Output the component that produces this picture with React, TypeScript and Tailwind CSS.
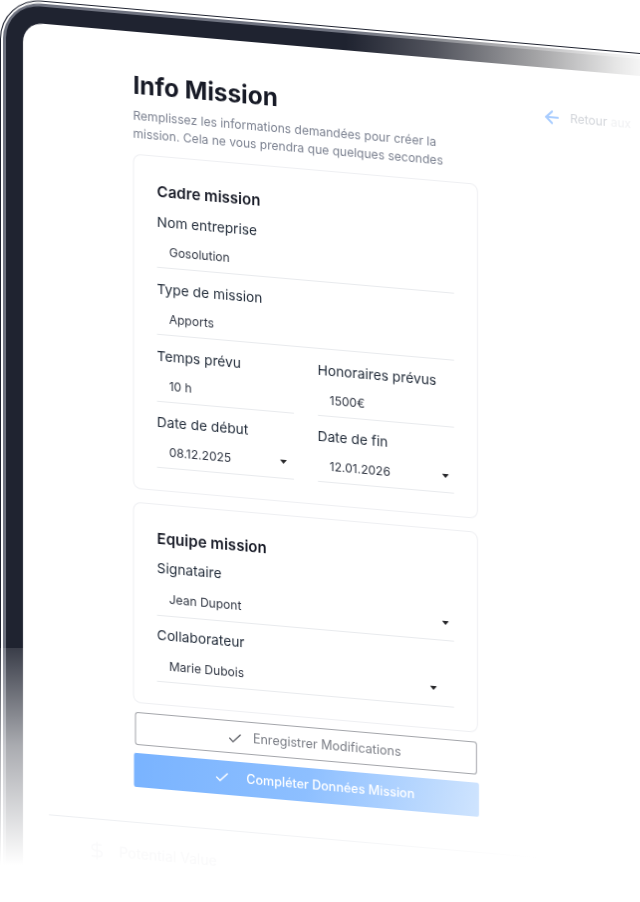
import { ArrowLeft, Check, DollarSign } from 'lucide-react';

const bandFade =
  'bg-[linear-gradient(90deg,#1f2330_0,#1f2330_340px,#53555e_430px,#a3a3a5_530px,#e6e6e6_610px,#ffffff_650px)]';
const lineFade =
  'bg-[linear-gradient(90deg,#6f7380_0,#6f7380_340px,#8a8c92_430px,#bcbcbe_530px,#ececec_610px,#ffffff_650px)]';

const Caret = () => (
  <svg width="7" height="4" viewBox="0 0 7 4" className="shrink-0 -mt-[3px]">
    <path d="M0 0h7L3.5 4z" fill="#27272a" />
  </svg>
);

function Field({
  label,
  value,
  select,
  caretPad = 'pr-[5px]',
  inputH = 'h-[31px]',
}: {
  label: string;
  value: string;
  select?: boolean;
  caretPad?: string;
  inputH?: string;
}) {
  return (
    <div>
      <div className="h-6 text-[13.7px] leading-[18px] text-[#1f2937]">{label}</div>
      <div className={`flex items-center justify-between border-b border-[#e8eaed] pl-3 ${inputH} ${caretPad}`}>
        <span className="text-[12px] text-[#2f3542]">{value}</span>
        {select && <Caret />}
      </div>
    </div>
  );
}

export default function App() {
  return (
    <div className="relative h-[902px] w-[640px] overflow-hidden bg-white font-['Inter',sans-serif]">
      <div className="-mt-[3px] w-[800px] origin-top-left [transform:skewY(5deg)] blur-[0.3px]">
        {/* device frame */}
        <div className="rounded-[42px] border border-[#1f2330] bg-white pl-[2px] pt-[2px]">
          <div className={`rounded-[38px] pl-[3px] pt-[3px] ${lineFade}`}>
            <div className={`rounded-[34px] pl-[17px] pt-[17px] ${bandFade}`}>
              <div className="h-[1100px] rounded-[20px] bg-white pl-[26px] pt-[38px]">
                <div className="ml-[84px] w-[600px]">
                  <div className="flex">
                    <div className="w-[345px]">
                      <h1 className="text-[24.3px] font-bold leading-[30px] text-[#171a26]">Info Mission</h1>
                      <p className="mt-[7px] w-[320px] text-[12px] leading-[18px] text-[#7b8190]">
                        Remplissez les informations demandées pour créer la mission. Cela ne vous prendra que quelques secondes
                      </p>
                    </div>
                    <div className="ml-[64px] flex h-[22px] items-center gap-2 text-[12px]">
                      <ArrowLeft size={20} strokeWidth={2.5} className="text-[#a9cdff]" />
                      <span>
                        <span className="text-[#d2d5da]">Retour</span> <span className="text-[#f0f1f3]">aux</span>
                      </span>
                    </div>
                  </div>

                  <div className="mt-[11px] h-[335px] w-[345px] rounded-lg border border-[#eeeff2] px-[23px] pt-6">
                    <h2 className="text-[15px] font-semibold leading-[22px] text-[#171a26]">Cadre mission</h2>
                    <div className="mt-[10px] flex flex-col gap-3">
                      <Field label="Nom entreprise" value="Gosolution" />
                      <Field label="Type de mission" value="Apports" />
                      <div className="grid grid-cols-2 gap-x-6 gap-y-[11px]">
                        <Field label="Temps prévu" value="10 h" />
                        <Field label="Honoraires prévus" value="1500€" />
                        <Field label="Date de début" value="08.12.2025" select caretPad="pr-[7px]" />
                        <Field label="Date de fin" value="12.01.2026" select />
                      </div>
                    </div>
                  </div>

                  <div className="mt-[13px] h-[201px] w-[345px] rounded-lg border border-[#eeeff2] px-[23px] pt-6">
                    <h2 className="text-[15px] font-semibold leading-5 text-[#171a26]">Equipe mission</h2>
                    <div className="mt-[10px] flex flex-col gap-[10px]">
                      <Field label="Signataire" value="Jean Dupont" select inputH="h-[33px]" />
                      <Field label="Collaborateur" value="Marie Dubois" select inputH="h-[32px]" caretPad="pr-[17px]" />
                    </div>
                  </div>

                  <button className="ml-[2px] mt-[9px] flex h-[33px] w-[342px] items-center justify-center gap-[10px] rounded-[3px] border border-[#a3a5aa] pl-4 pt-[2px] text-[12.5px] text-[#7a7d85]">
                    <Check size={16} strokeWidth={1.75} className="text-[#55575e]" />
                    Enregistrer Modifications
                  </button>
                  <button className="ml-[1px] mt-2 flex h-[34px] w-[345px] items-center justify-center gap-[16px] rounded-[2px] bg-[linear-gradient(100deg,#79b3ff_0%,#8dbfff_50%,#cfe4fe_100%)] pl-4 text-[12.5px] font-medium text-white">
                    <Check size={16} strokeWidth={2} />
                    Compléter Données Mission
                  </button>
                </div>

                <div className="mt-[35px] h-px w-[490px] bg-[linear-gradient(90deg,#eceef1,#f3f4f6_60%,#ffffff)]" />
                <div className="ml-[38px] mt-[20px] flex items-center gap-[12px] text-[14px] text-[#f9f9fa]">
                  <DollarSign size={20} strokeWidth={1.5} />
                  Potential Value
                </div>
              </div>
            </div>
          </div>
        </div>
      </div>

      {/* bottom fade of the frame */}
      <div className="absolute left-0 top-[648px] h-[217px] w-[27px] bg-[linear-gradient(180deg,rgba(255,255,255,0.12),rgba(255,255,255,0.62)_45%,#ffffff)]" />
      <div className="absolute left-0 top-[865px] h-[37px] w-[27px] bg-white" />
    </div>
  );
}
